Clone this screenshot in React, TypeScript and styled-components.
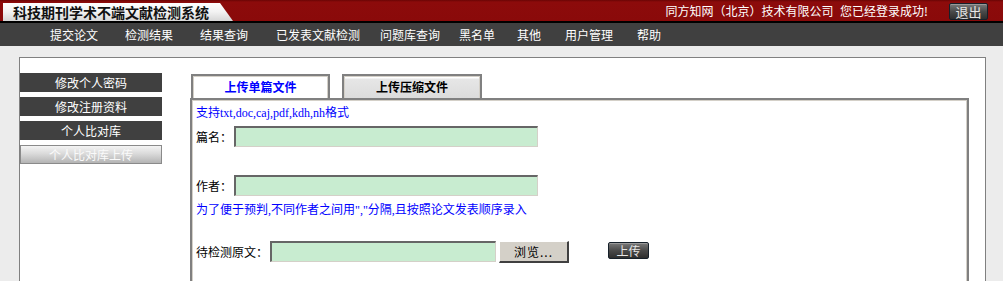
import React from 'react';
import styled, { createGlobalStyle, css } from 'styled-components';

const GlobalStyle = createGlobalStyle`
    html, body {
        margin: 0;
        padding: 0;
        background: #ececec;
    }
    body {
        font-family: 'Liberation Serif', 'Noto Sans CJK SC', serif;
        font-size: 12px;
        color: #000;
    }
`;

const CJK = `'Noto Sans CJK SC', 'Liberation Sans', sans-serif`;

const Header = styled.div`
    display: flex;
    height: 21px;
    background: linear-gradient(to bottom, #6a0505 0, #8c0b0b 2px, #8a0a0a 100%);
    border-bottom: 2px solid #000;
`;

const TitleTab = styled.div`
    align-self: flex-end;
    margin-left: 3px;
    width: 230px;
    height: 18px;
    padding-left: 10px;
    box-sizing: border-box;
    background: linear-gradient(to bottom, #ffffff 0%, #f2f2f2 50%, #d6d6d6 100%);
    clip-path: polygon(0 0, 217px 0, 230px 100%, 0 100%);
    font-family: ${CJK};
    font-size: 14px;
    font-weight: bold;
    line-height: 18px;
    color: #111;
    white-space: nowrap;
`;

const LoginInfo = styled.div`
    margin-left: auto;
    align-self: center;
    font-family: ${CJK};
    font-size: 12px;
    color: #fff;
    white-space: nowrap;
    word-spacing: 4px;
`;

const DarkButton = styled.button<{ $width: number; $height: number }>`
    display: flex;
    align-items: center;
    justify-content: center;
    width: ${p => p.$width}px;
    height: ${p => p.$height}px;
    padding: 0;
    border: 1px solid #16202a;
    border-radius: 2px;
    background: linear-gradient(to bottom, #7a7a7a 0%, #4a4a4a 50%, #2e2e2e 100%);
    box-shadow: inset 0 1px 0 rgba(255, 255, 255, 0.25);
    color: #e6e6e6;
    font-family: ${CJK};
    font-size: 12px;
    line-height: 1;
    cursor: pointer;
`;

const ExitButton = styled(DarkButton)`
    align-self: flex-start;
    margin: 3px 15px 0 21px;
    font-size: 13px;
`;

const Nav = styled.div`
    display: flex;
    height: 23px;
    padding-left: 50px;
    background: #404040;
`;

const NavItem = styled.a<{ $width: number }>`
    width: ${p => p.$width}px;
    flex: none;
    font-family: ${CJK};
    font-size: 12px;
    line-height: 23px;
    color: #fff;
    white-space: nowrap;
    cursor: pointer;
`;

const Panel = styled.div`
    display: flex;
    margin: 11px 0 0 19px;
    width: 967px;
    box-sizing: border-box;
    min-height: calc(100vh - 57px);
    padding-top: 15px;
    background: #fff;
    border: 1px solid #808080;
    border-bottom: none;
`;

const SideMenu = styled.div`
    display: flex;
    flex-direction: column;
    gap: 5px;
    width: 142px;
    flex: none;
`;

const SideItem = styled.div<{ $active?: boolean }>`
    height: 19px;
    box-sizing: border-box;
    font-family: ${CJK};
    font-size: 12px;
    line-height: 19px;
    text-align: center;
    color: #fff;
    background: #404040;
    cursor: pointer;

    ${p =>
        p.$active &&
        css`
            line-height: 17px;
            border: 1px solid #8a8a8a;
            background: linear-gradient(to bottom, #f4f4f4 0%, #dadada 45%, #b4b4b4 100%);
            color: #fafafa;
        `}
`;

const Content = styled.div`
    display: flex;
    flex-direction: column;
    width: 779px;
    margin: 1px 0 0 28px;
`;

const Tabs = styled.div`
    display: flex;
    gap: 12px;
    margin-left: 1px;
`;

const frame = css`
    border: 2px solid #808080;
    box-shadow: inset 1px 1px 0 #d4d0c8, inset -1px 0 0 #d4d0c8;
`;

const Tab = styled.div<{ $active?: boolean; $width: number }>`
    ${frame};
    border-bottom: none;
    width: ${p => p.$width}px;
    height: 24px;
    box-sizing: border-box;
    font-family: ${CJK};
    font-size: 12px;
    font-weight: bold;
    line-height: 22px;
    text-align: center;
    cursor: pointer;
    color: ${p => (p.$active ? '#0000ff' : '#000')};
    background: ${p =>
        p.$active ? '#fff' : 'linear-gradient(to bottom, #ffffff 0, #ffffff 2px, #e6e6e6 3px, #dcdcdc 100%)'};
`;

const Box = styled.div`
    ${frame};
    border-bottom: none;
    flex: 1;
    padding: 5px 4px 3px;
`;

const Hint = styled.div<{ $gap?: number }>`
    margin-top: ${p => p.$gap ?? 0}px;
    color: #0000ff;
    font-size: 12px;
    line-height: 16px;
    white-space: nowrap;
`;

const Row = styled.div<{ $gap: number }>`
    display: flex;
    align-items: flex-start;
    margin-top: ${p => p.$gap}px;
`;

const Label = styled.label`
    font-family: ${CJK};
    font-size: 12px;
    line-height: 21px;
    margin-right: 2px;
    white-space: nowrap;
`;

const TextInput = styled.input<{ $width: number }>`
    width: ${p => p.$width}px;
    height: 21px;
    box-sizing: border-box;
    margin: 0;
    padding: 0 2px;
    background: #c8ecd0;
    border-style: solid;
    border-width: 2px 1px 1px 2px;
    border-color: #666 #d4d0c8 #d4d0c8 #666;
    outline: none;
    font-size: 12px;
`;

const BrowseButton = styled.button`
    width: 70px;
    height: 22px;
    margin: 0 0 0 3px;
    padding: 0;
    background: #d4d0c8;
    border-style: solid;
    border-width: 1px 2px 2px 1px;
    border-color: #fff #404040 #404040 #fff;
    font-family: ${CJK};
    font-size: 12px;
    color: #000;
    letter-spacing: 1px;
`;

const UploadButton = styled(DarkButton)`
    margin: 1px 0 0 39px;
`;

const navItems: [string, number][] = [
    ['提交论文', 75],
    ['检测结果', 75],
    ['结果查询', 76],
    ['已发表文献检测', 104],
    ['问题库查询', 79],
    ['黑名单', 58],
    ['其他', 48],
    ['用户管理', 72],
    ['帮助', 40],
];

const sideItems = ['修改个人密码', '修改注册资料', '个人比对库', '个人比对库上传'];

const App = () => (
    <>
        <GlobalStyle />
        <Header>
            <TitleTab>科技期刊学术不端文献检测系统</TitleTab>
            <LoginInfo>同方知网（北京）技术有限公司 您已经登录成功!</LoginInfo>
            <ExitButton $width={39} $height={17}>
                退出
            </ExitButton>
        </Header>
        <Nav>
            {navItems.map(([label, width]) => (
                <NavItem key={label} $width={width}>
                    {label}
                </NavItem>
            ))}
        </Nav>
        <Panel>
            <SideMenu>
                {sideItems.map((item, i) => (
                    <SideItem key={item} $active={i === sideItems.length - 1}>
                        {item}
                    </SideItem>
                ))}
            </SideMenu>
            <Content>
                <Tabs>
                    <Tab $active $width={139}>
                        上传单篇文件
                    </Tab>
                    <Tab $width={140}>上传压缩文件</Tab>
                </Tabs>
                <Box>
                    <Hint>支持txt,doc,caj,pdf,kdh,nh格式</Hint>
                    <Row $gap={5}>
                        <Label>篇名：</Label>
                        <TextInput $width={304} />
                    </Row>
                    <Row $gap={28}>
                        <Label>作者：</Label>
                        <TextInput $width={304} />
                    </Row>
                    <Hint $gap={6}>为了便于预判,不同作者之间用","分隔,且按照论文发表顺序录入</Hint>
                    <Row $gap={23}>
                        <Label>待检测原文：</Label>
                        <TextInput $width={226} />
                        <BrowseButton>浏览...</BrowseButton>
                        <UploadButton $width={41} $height={17}>
                            上传
                        </UploadButton>
                    </Row>
                </Box>
            </Content>
        </Panel>
    </>
);

export default App;
